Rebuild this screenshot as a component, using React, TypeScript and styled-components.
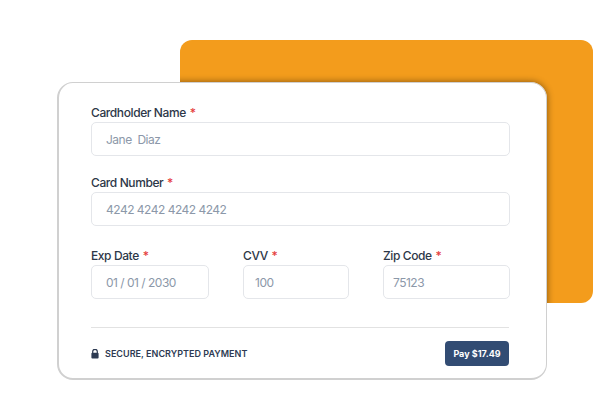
import styled, { createGlobalStyle } from 'styled-components';

const GlobalStyle = createGlobalStyle`
	html, body {
		margin: 0;
		padding: 0;
		background: #fff;
	}
	body {
		font-family: 'Inter', 'Liberation Sans', sans-serif;
	}
`;

export default function App() {
	return (
		<Page>
			<GlobalStyle />
			<Backdrop />
			<Card>
				<Field>
					<Label>
						Cardholder Name <Star>*</Star>
					</Label>
					<Input placeholder='Jane  Diaz' />
				</Field>
				<Field>
					<Label>
						Card Number <Star>*</Star>
					</Label>
					<Input placeholder='4242 4242 4242 4242' />
				</Field>
				<Row>
					<Field>
						<Label>
							Exp Date <Star>*</Star>
						</Label>
						<Input placeholder='01 / 01 / 2030' />
					</Field>
					<Field>
						<Label>
							CVV <Star>*</Star>
						</Label>
						<Input $inset={11} placeholder='100' />
					</Field>
					<Field>
						<Label>
							Zip Code <Star>*</Star>
						</Label>
						<Input $inset={9} placeholder='75123' />
					</Field>
				</Row>
				<Footer>
					<Secure>
						<svg width='8' height='10' viewBox='0 0 8 10' aria-hidden='true'>
							<path
								d='M1.7 4V2.6a2.3 2.3 0 0 1 4.6 0V4'
								fill='none'
								stroke='#2d3a52'
								strokeWidth='1.2'
							/>
							<rect x='0.4' y='3.8' width='7.2' height='5.8' rx='1' fill='#2d3a52' />
						</svg>
						SECURE, ENCRYPTED PAYMENT
					</Secure>
					<PayButton>Pay $17.49</PayButton>
				</Footer>
			</Card>
		</Page>
	);
}

const Page = styled.div`
	position: relative;
	width: 614px;
	height: 402px;
	padding: 82px 0 0 57px;
	box-sizing: border-box;
	overflow: hidden;
`;

// the card's shadow only shows on the orange panel, so it is cast here and clipped
const Backdrop = styled.div`
	position: absolute;
	left: 180px;
	top: 40px;
	width: 413px;
	height: 263px;
	background: #f39c1c;
	border-radius: 12px;
	overflow: hidden;
	&::after {
		content: '';
		position: absolute;
		left: -123px;
		top: 42px;
		width: 490px;
		height: 298px;
		border-radius: 16px;
		box-shadow: 0 0 7px rgba(0, 0, 0, 0.45);
	}
`;

const Card = styled.div`
	position: relative;
	width: 490px;
	height: 298px;
	box-sizing: border-box;
	padding: 22px 36px 0 32px;
	background: #fff;
	border: 1.5px solid #d0d0d0;
	border-left-width: 2px;
	border-bottom-width: 2px;
	border-radius: 16px;
	display: flex;
	flex-direction: column;
	gap: 19px;
`;

const Field = styled.div`
	display: flex;
	flex-direction: column;
`;

const Label = styled.label`
	font-size: 12px;
	line-height: 15px;
	margin-bottom: 2px;
	font-weight: 500;
	letter-spacing: -0.4px;
	color: #2d3748;
`;

const Star = styled.span`
	color: #e53e3e;
	margin-left: 1px;
`;

const Input = styled.input<{ $inset?: number }>`
	height: 34px;
	width: 100%;
	box-sizing: border-box;
	padding: 0 ${(p) => p.$inset ?? 14}px;
	border: 1px solid #e4e6ea;
	border-radius: 5px;
	background: #fff;
	font-family: inherit;
	font-size: 12px;
	letter-spacing: -0.5px;
	outline: none;
	&::placeholder {
		color: #8c98a9;
		opacity: 1;
	}
`;

const Row = styled.div`
	display: grid;
	grid-template-columns: 118px 106px 127px;
	justify-content: space-between;
	margin-top: 3px;
`;

const Footer = styled.div`
	margin-top: 9px;
	padding-top: 13px;
	border-top: 1px solid #e2e2e2;
	margin-right: 1px;
	display: flex;
	align-items: center;
	justify-content: space-between;
`;

const Secure = styled.div`
	display: flex;
	align-items: center;
	gap: 6px;
	font-size: 9px;
	font-weight: 600;
	letter-spacing: 0.03px;
	color: #2d3a52;
`;

const PayButton = styled.button`
	width: 64px;
	height: 25px;
	padding: 0;
	border: none;
	border-radius: 4px;
	background: #324c73;
	color: #fff;
	font-family: inherit;
	font-size: 9px;
	font-weight: 700;
`;
